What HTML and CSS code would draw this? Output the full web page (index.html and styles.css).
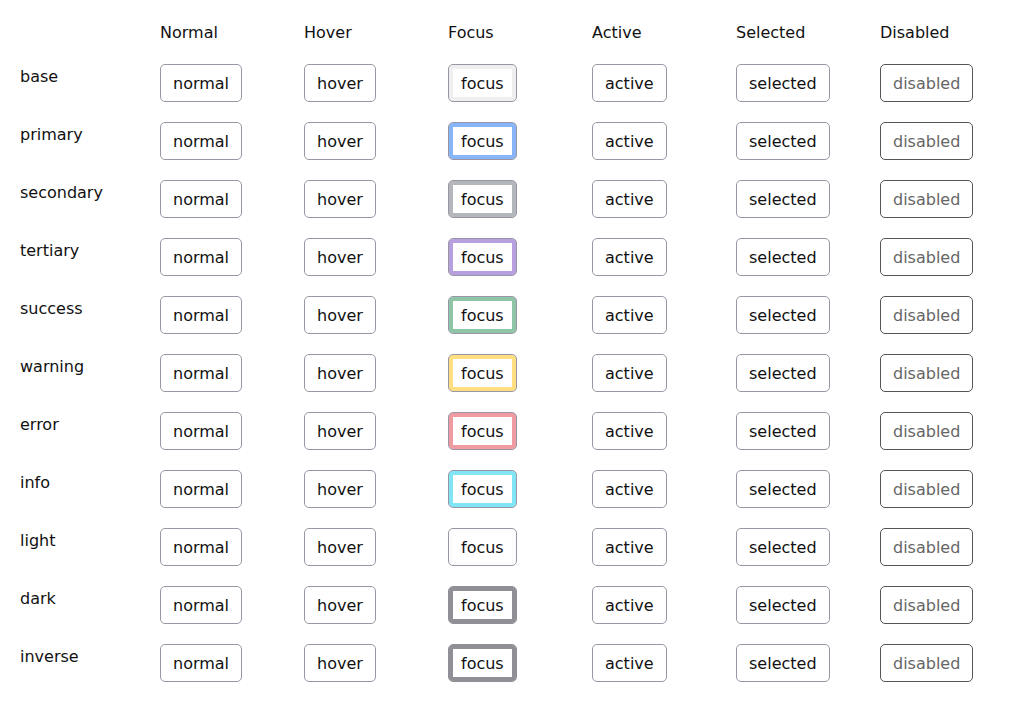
FILE: index.html
```html
<!DOCTYPE html>
<html>
<head>
<meta charset="utf-8">
<link rel="stylesheet" href="styles.css">
</head>
<body>
<div class="grid">
  <div class="head"></div>
  <div class="head">Normal</div>
  <div class="head">Hover</div>
  <div class="head">Focus</div>
  <div class="head">Active</div>
  <div class="head">Selected</div>
  <div class="head">Disabled</div>

  <div class="label">base</div>
  <div><button class="btn">normal</button></div><div><button class="btn">hover</button></div><div><button class="btn focus f-base">focus</button></div><div><button class="btn">active</button></div><div><button class="btn">selected</button></div><div><button class="btn dis">disabled</button></div>

  <div class="label">primary</div>
  <div><button class="btn">normal</button></div><div><button class="btn">hover</button></div><div><button class="btn focus f-primary">focus</button></div><div><button class="btn">active</button></div><div><button class="btn">selected</button></div><div><button class="btn dis">disabled</button></div>

  <div class="label">secondary</div>
  <div><button class="btn">normal</button></div><div><button class="btn">hover</button></div><div><button class="btn focus f-secondary">focus</button></div><div><button class="btn">active</button></div><div><button class="btn">selected</button></div><div><button class="btn dis">disabled</button></div>

  <div class="label">tertiary</div>
  <div><button class="btn">normal</button></div><div><button class="btn">hover</button></div><div><button class="btn focus f-tertiary">focus</button></div><div><button class="btn">active</button></div><div><button class="btn">selected</button></div><div><button class="btn dis">disabled</button></div>

  <div class="label">success</div>
  <div><button class="btn">normal</button></div><div><button class="btn">hover</button></div><div><button class="btn focus f-success">focus</button></div><div><button class="btn">active</button></div><div><button class="btn">selected</button></div><div><button class="btn dis">disabled</button></div>

  <div class="label">warning</div>
  <div><button class="btn">normal</button></div><div><button class="btn">hover</button></div><div><button class="btn focus f-warning">focus</button></div><div><button class="btn">active</button></div><div><button class="btn">selected</button></div><div><button class="btn dis">disabled</button></div>

  <div class="label">error</div>
  <div><button class="btn">normal</button></div><div><button class="btn">hover</button></div><div><button class="btn focus f-error">focus</button></div><div><button class="btn">active</button></div><div><button class="btn">selected</button></div><div><button class="btn dis">disabled</button></div>

  <div class="label">info</div>
  <div><button class="btn">normal</button></div><div><button class="btn">hover</button></div><div><button class="btn focus f-info">focus</button></div><div><button class="btn">active</button></div><div><button class="btn">selected</button></div><div><button class="btn dis">disabled</button></div>

  <div class="label">light</div>
  <div><button class="btn">normal</button></div><div><button class="btn">hover</button></div><div><button class="btn focus f-light">focus</button></div><div><button class="btn">active</button></div><div><button class="btn">selected</button></div><div><button class="btn dis">disabled</button></div>

  <div class="label">dark</div>
  <div><button class="btn">normal</button></div><div><button class="btn">hover</button></div><div><button class="btn focus f-dark">focus</button></div><div><button class="btn">active</button></div><div><button class="btn">selected</button></div><div><button class="btn dis">disabled</button></div>

  <div class="label">inverse</div>
  <div><button class="btn">normal</button></div><div><button class="btn">hover</button></div><div><button class="btn focus f-dark">focus</button></div><div><button class="btn">active</button></div><div><button class="btn">selected</button></div><div><button class="btn dis">disabled</button></div>
</div>
</body>
</html>
```

FILE: styles.css
```css
html, body {
  margin: 0;
  padding: 0;
  background: #ffffff;
}
body {
  font-family: "DejaVu Sans", sans-serif;
  font-size: 16px;
  color: #111111;
}
.grid {
  display: grid;
  grid-template-columns: 140px repeat(6, 144px);
  grid-template-rows: 21px;
  grid-auto-rows: 38px;
  row-gap: 20px;
  padding: 23px 0 0 20px;
  align-items: start;
}
.head {
  line-height: 19px;
  height: 19px;
}
.label {
  line-height: 19px;
  padding-top: 3px;
}
.btn {
  font-family: "DejaVu Sans", sans-serif;
  font-size: 16px;
  line-height: 20px;
  color: #111111;
  background: #ffffff;
  border: 1px solid #9896a4;
  border-radius: 5px;
  padding: 9px 12px 7px;
  margin: 0;
  display: block;
}
.dis {
  color: #666666;
  border-color: #555555;
}
.f-base { box-shadow: inset 0 0 0 4px #efefef; }
.f-primary { box-shadow: inset 0 0 0 4px #88b4f8; }
.f-secondary { box-shadow: inset 0 0 0 4px #b3b7bc; }
.f-tertiary { box-shadow: inset 0 0 0 4px #b8a0e0; }
.f-success { box-shadow: inset 0 0 0 4px #8ec5a6; }
.f-warning { box-shadow: inset 0 0 0 4px #ffdf7f; }
.f-error { box-shadow: inset 0 0 0 4px #f09aa1; }
.f-info { box-shadow: inset 0 0 0 4px #80e5f5; }
.f-light { box-shadow: inset 0 0 0 4px #fcfcfc; }
.f-dark { box-shadow: inset 0 0 0 4px #8f8f95; border-color: #8f8f95; }
```
